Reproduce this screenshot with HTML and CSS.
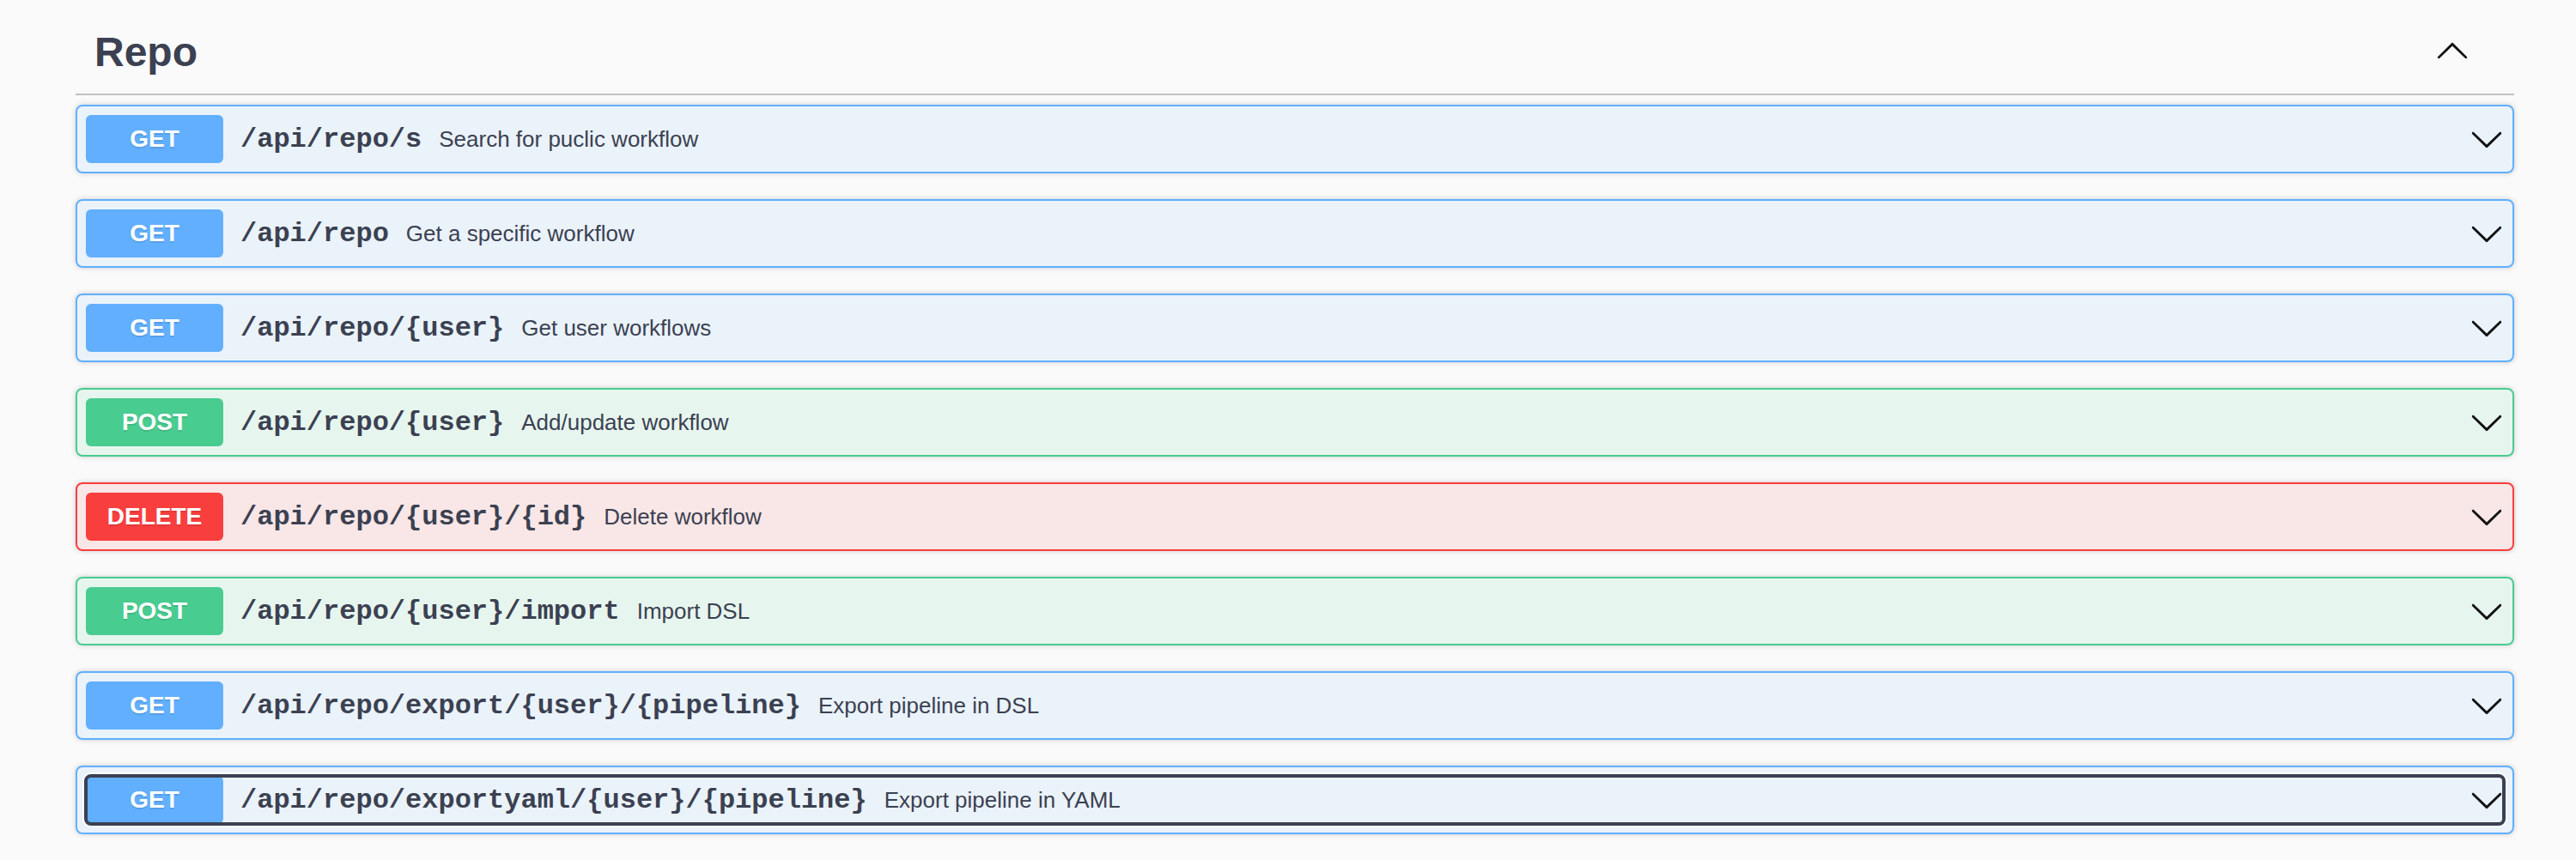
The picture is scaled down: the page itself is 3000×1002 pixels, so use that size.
FILE: index.html
```html
<!DOCTYPE html>
<html lang="en">
<head>
    <meta charset="UTF-8">
    <meta name="viewport" content="width=device-width, initial-scale=1.0">
    <title>Repo</title>
    <link rel="stylesheet" href="styles.css">
</head>
<body>
    <div class="wrapper">
        <h3 class="opblock-tag">
            <span class="tag-name">Repo</span>
            <button class="expand-operation" aria-label="Collapse">
                <svg class="arrow" width="40" height="40" viewBox="0 0 20 20"><path d="M17.418 14.908c.272.268.709.268.979 0s.271-.701 0-.969l-7.908-7.83c-.27-.268-.707-.268-.979 0l-7.908 7.83c-.27.268-.27.701 0 .969.271.268.709.268.979 0L10 7.767l7.418 7.141z"/></svg>
            </button>
        </h3>

        <div class="opblock opblock-get">
            <div class="opblock-summary">
                <span class="method">GET</span>
                <span class="path">/api/repo/s</span>
                <span class="description">Search for puclic workflow</span>
                <svg class="arrow" width="40" height="40" viewBox="0 0 20 20"><path d="M17.418 6.109c.272-.268.709-.268.979 0s.271.701 0 .969l-7.908 7.83c-.27.268-.707.268-.979 0l-7.908-7.83c-.27-.268-.27-.701 0-.969.271-.268.709-.268.979 0L10 13.25l7.418-7.141z"/></svg>
            </div>
        </div>

        <div class="opblock opblock-get">
            <div class="opblock-summary">
                <span class="method">GET</span>
                <span class="path">/api/repo</span>
                <span class="description">Get a specific workflow</span>
                <svg class="arrow" width="40" height="40" viewBox="0 0 20 20"><path d="M17.418 6.109c.272-.268.709-.268.979 0s.271.701 0 .969l-7.908 7.83c-.27.268-.707.268-.979 0l-7.908-7.83c-.27-.268-.27-.701 0-.969.271-.268.709-.268.979 0L10 13.25l7.418-7.141z"/></svg>
            </div>
        </div>

        <div class="opblock opblock-get">
            <div class="opblock-summary">
                <span class="method">GET</span>
                <span class="path">/api/repo/{user}</span>
                <span class="description">Get user workflows</span>
                <svg class="arrow" width="40" height="40" viewBox="0 0 20 20"><path d="M17.418 6.109c.272-.268.709-.268.979 0s.271.701 0 .969l-7.908 7.83c-.27.268-.707.268-.979 0l-7.908-7.83c-.27-.268-.27-.701 0-.969.271-.268.709-.268.979 0L10 13.25l7.418-7.141z"/></svg>
            </div>
        </div>

        <div class="opblock opblock-post">
            <div class="opblock-summary">
                <span class="method">POST</span>
                <span class="path">/api/repo/{user}</span>
                <span class="description">Add/update workflow</span>
                <svg class="arrow" width="40" height="40" viewBox="0 0 20 20"><path d="M17.418 6.109c.272-.268.709-.268.979 0s.271.701 0 .969l-7.908 7.83c-.27.268-.707.268-.979 0l-7.908-7.83c-.27-.268-.27-.701 0-.969.271-.268.709-.268.979 0L10 13.25l7.418-7.141z"/></svg>
            </div>
        </div>

        <div class="opblock opblock-delete">
            <div class="opblock-summary">
                <span class="method">DELETE</span>
                <span class="path">/api/repo/{user}/{id}</span>
                <span class="description">Delete workflow</span>
                <svg class="arrow" width="40" height="40" viewBox="0 0 20 20"><path d="M17.418 6.109c.272-.268.709-.268.979 0s.271.701 0 .969l-7.908 7.83c-.27.268-.707.268-.979 0l-7.908-7.83c-.27-.268-.27-.701 0-.969.271-.268.709-.268.979 0L10 13.25l7.418-7.141z"/></svg>
            </div>
        </div>

        <div class="opblock opblock-post">
            <div class="opblock-summary">
                <span class="method">POST</span>
                <span class="path">/api/repo/{user}/import</span>
                <span class="description">Import DSL</span>
                <svg class="arrow" width="40" height="40" viewBox="0 0 20 20"><path d="M17.418 6.109c.272-.268.709-.268.979 0s.271.701 0 .969l-7.908 7.83c-.27.268-.707.268-.979 0l-7.908-7.83c-.27-.268-.27-.701 0-.969.271-.268.709-.268.979 0L10 13.25l7.418-7.141z"/></svg>
            </div>
        </div>

        <div class="opblock opblock-get">
            <div class="opblock-summary">
                <span class="method">GET</span>
                <span class="path">/api/repo/export/{user}/{pipeline}</span>
                <span class="description">Export pipeline in DSL</span>
                <svg class="arrow" width="40" height="40" viewBox="0 0 20 20"><path d="M17.418 6.109c.272-.268.709-.268.979 0s.271.701 0 .969l-7.908 7.83c-.27.268-.707.268-.979 0l-7.908-7.83c-.27-.268-.27-.701 0-.969.271-.268.709-.268.979 0L10 13.25l7.418-7.141z"/></svg>
            </div>
        </div>

        <div class="opblock opblock-get">
            <div class="opblock-summary focused">
                <span class="method">GET</span>
                <span class="path">/api/repo/exportyaml/{user}/{pipeline}</span>
                <span class="description">Export pipeline in YAML</span>
                <svg class="arrow" width="40" height="40" viewBox="0 0 20 20"><path d="M17.418 6.109c.272-.268.709-.268.979 0s.271.701 0 .969l-7.908 7.83c-.27.268-.707.268-.979 0l-7.908-7.83c-.27-.268-.27-.701 0-.969.271-.268.709-.268.979 0L10 13.25l7.418-7.141z"/></svg>
            </div>
        </div>
    </div>
</body>
</html>
```

FILE: styles.css
```css
* {
    margin: 0;
    padding: 0;
    box-sizing: border-box;
}

body {
    font-family: 'Liberation Sans', Arial, sans-serif;
    background-color: #fafafa;
    color: #3b4151;
}

.wrapper {
    width: 2840px;
    margin-left: 88px;
}

/* tag header */
.opblock-tag {
    display: flex;
    align-items: center;
    height: 111px;
    padding: 12px 52px 0 22px;
    border-bottom: 2px solid rgba(59, 65, 81, 0.3);
    margin-bottom: 11px;
    font-size: 48px;
    font-weight: bold;
    color: #3b4151;
}

.tag-name {
    flex: 1;
}

.expand-operation {
    border: none;
    background: none;
    display: flex;
    margin-bottom: 6px;
}

.arrow {
    fill: #111;
    flex-shrink: 0;
}

/* operation blocks */
.opblock {
    border: 2px solid #000;
    border-radius: 8px;
    box-shadow: 0 0 6px rgba(0, 0, 0, 0.19);
    margin-bottom: 30px;
}

.opblock-summary {
    display: flex;
    align-items: center;
    padding: 10px;
    height: 76px;
}

.opblock-summary.focused {
    position: relative;
}

.opblock-summary.focused::after {
    content: '';
    position: absolute;
    top: 8px;
    left: 8px;
    right: 8px;
    bottom: 8px;
    border: 4px solid #3b4151;
    border-radius: 8px;
    box-shadow: 0 0 0 2px #ffffff;
    pointer-events: none;
}

.method {
    min-width: 160px;
    padding: 12px 0;
    border-radius: 6px;
    background-color: #000;
    color: #ffffff;
    font-size: 28px;
    font-weight: bold;
    line-height: 32px;
    text-align: center;
    text-shadow: 0 2px 0 rgba(0, 0, 0, 0.1);
}

.path {
    padding: 0 20px;
    font-family: 'Liberation Mono', 'Courier New', monospace;
    font-size: 32px;
    font-weight: bold;
    color: #3b4151;
}

.description {
    flex: 1;
    font-size: 26px;
    color: #3b4151;
}

.opblock-get { background-color: rgba(97, 175, 254, 0.1); border-color: #61affe; }
.opblock-get .method { background-color: #61affe; }

.opblock-post { background-color: rgba(73, 204, 144, 0.1); border-color: #49cc90; }
.opblock-post .method { background-color: #49cc90; }

.opblock-delete { background-color: rgba(249, 62, 62, 0.1); border-color: #f93e3e; }
.opblock-delete .method { background-color: #f93e3e; }
```
